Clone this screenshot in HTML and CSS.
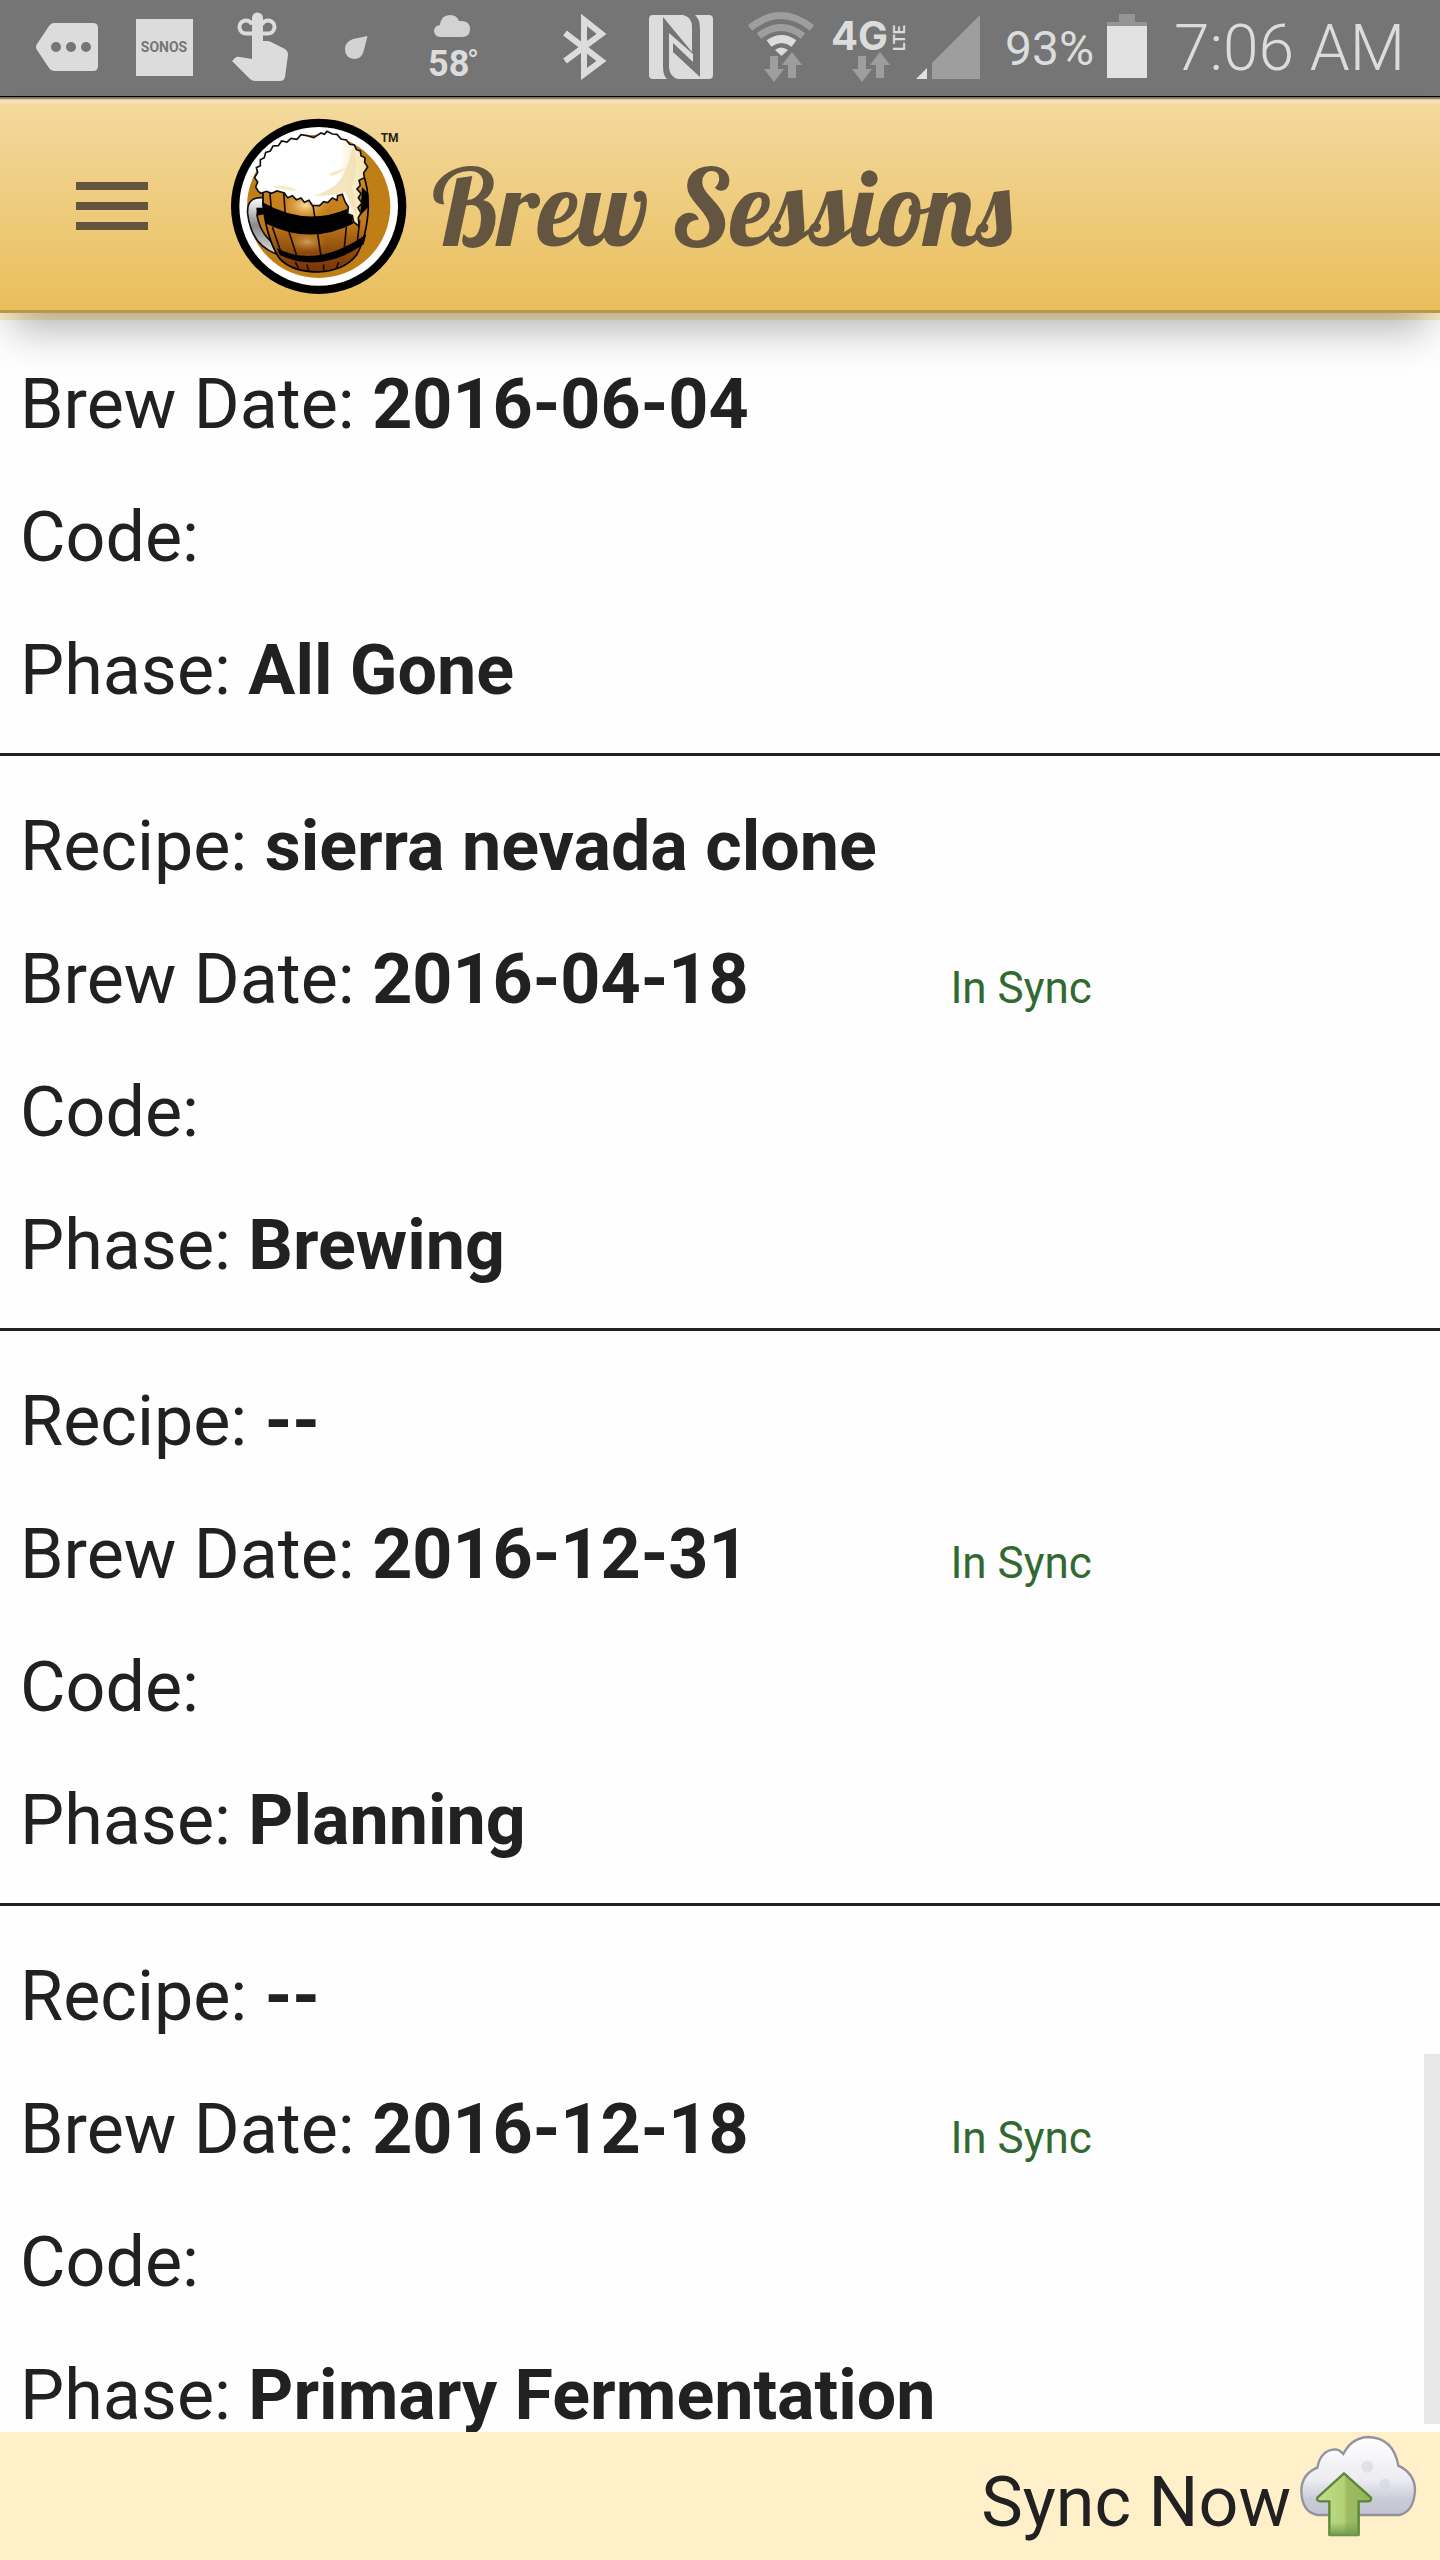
FILE: index.html
```html
<!DOCTYPE html>
<html lang="en">
<head>
    <meta charset="UTF-8">
    <meta name="viewport" content="width=device-width, initial-scale=1.0">
    <title>Brew Sessions</title>
    <link rel="stylesheet" href="styles.css">
</head>
<body>
    <!-- Status bar -->
    <div class="status-bar">
        <div class="status-group">
            <svg width="116" height="96" viewBox="0 0 116 96">
                <path fill="#dcdcdc" fill-rule="evenodd" d="M54 23h39q5 0 5 5v38q0 5-5 5H54q-3 0-5-3L37 50q-2-3 0-6l12-18q2-3 5-3zM56 42a5 5 0 1 0 0 10 5 5 0 1 0 0-10zM71 42a5 5 0 1 0 0 10 5 5 0 1 0 0-10zM86 42a5 5 0 1 0 0 10 5 5 0 1 0 0-10z"/>
            </svg>
            <svg width="96" height="96" viewBox="116 0 96 96">
                <rect x="136" y="19" width="57" height="57" fill="#dcdcdc"/>
                <text class="sonos" x="164" y="52" text-anchor="middle">SONOS</text>
            </svg>
            <svg width="104" height="96" viewBox="212 0 104 96">
                <path fill="none" stroke="#dcdcdc" stroke-width="4" d="M254 33.500H246a6.500 6.500 0 1 1 6-9M260 33.500H268a6.500 6.500 0 1 0-6-9"/>
                <path fill="#dcdcdc" d="M252 59V18a5.300 5.300 0 0 1 11 0v23h4q2 0 4 1l14 7q3 2 3 6l-3 22q-1 4-5 4h-25q-3 0-5-2L232 61l3-3q2-2 5-1z"/>
            </svg>
            <svg width="82" height="96" viewBox="316 0 82 96">
                <path fill="#d2d2d2" d="M367.500 36L364 50q-2 9-10 9-9-1-9-10 0-7 8-10z"/>
            </svg>
            <svg width="108" height="96" viewBox="398 0 108 96">
                <path fill="#d2d2d2" d="M440 37a6 6 0 0 1 0-12q1-10 10-10 7 0 9 6 11-1 11 8 0 8-8 8z"/>
                <text class="temp" x="428" y="76">58</text>
                <text class="degree" x="467" y="72">°</text>
            </svg>
        </div>
        <div class="status-group">
            <svg width="83" height="96" viewBox="546 0 83 96">
                <path fill="none" stroke="#dcdcdc" stroke-width="6" d="M566 33l36.500 28L585 74V20l17.500 14L566 61"/>
            </svg>
            <svg width="102" height="96" viewBox="629 0 102 96">
                <path fill="#dcdcdc" d="M654 15h30q9 2 9 12v25L664 17v49q0 10 4 13h-14q-4 0-4-4V19q0-4 4-4zM710 15h-14q5 4 5 14v48l-27-25v-9l20 19V54L670 33v35q1 9 9 11h31q4 0 4-4V19q0-4-4-4z"/>
            </svg>
            <svg width="93" height="96" viewBox="731 0 93 96">
                <path fill="none" stroke="#9e9e9e" stroke-width="7" d="M751 28q31-25 62 0M760 36q22-17 44 0"/>
                <path fill="none" stroke="#dcdcdc" stroke-width="8" d="M770 43.500q12.500-9 25 0"/>
                <path fill="#dcdcdc" d="M776 50q6-5 13 0l-6.500 6z"/>
                <path fill="#9e9e9e" d="M771 56h8v13h6l-10 13-10-13h6zM789 78v-13h-6l10-13 10 13h-6v13z"/>
            </svg>
            <svg width="88" height="96" viewBox="824 0 88 96">
                <text class="network" x="832" y="50">4G</text>
                <text class="lte" transform="translate(906 51) rotate(-90)">LTE</text>
                <path fill="#9e9e9e" d="M859 56h8v13h6l-10 13-10-13h6zM877 78v-13h-6l10-13 10 13h-6v13z"/>
            </svg>
            <svg width="82" height="96" viewBox="912 0 82 96">
                <path fill="#e0e0e0" d="M917 79l11-11v11z"/>
                <path fill="#9e9e9e" d="M933 79V63l48-48v64z"/>
            </svg>
            <span class="battery-level">93%</span>
            <svg width="68" height="96" viewBox="1094 0 68 96">
                <path fill="#959595" d="M1107 22h12v-8h16v8h12v4h-40z"/>
                <rect x="1107" y="26" width="40" height="52" fill="#e2e2e2"/>
            </svg>
            <span class="clock">7:06 AM</span>
        </div>
    </div>

    <header class="header">
        <button class="menu-btn" type="button" aria-label="Menu">
            <span></span>
            <span></span>
            <span></span>
        </button>
        <svg class="logo" width="178" height="178" viewBox="59 80 534 534">
            <defs>
                <linearGradient id="wood" x1="0" y1="0" x2="0" y2="1">
                    <stop offset="0" stop-color="#cf8a1e"/>
                    <stop offset="0.5" stop-color="#c07a1c"/>
                    <stop offset="0.8" stop-color="#8a4a0c"/>
                    <stop offset="1" stop-color="#7a3206"/>
                </linearGradient>
                <radialGradient id="shine">
                    <stop offset="0" stop-color="#f8dc9c"/>
                    <stop offset="1" stop-color="#d99a30" stop-opacity="0"/>
                </radialGradient>
                <linearGradient id="handle" x1="0" y1="0" x2="0" y2="1">
                    <stop offset="0" stop-color="#fff"/>
                    <stop offset="0.5" stop-color="#8a8a8a"/>
                    <stop offset="1" stop-color="#ddd"/>
                </linearGradient>
                <linearGradient id="foam" x1="0" y1="0" x2="1" y2="0">
                    <stop offset="0.75" stop-color="#fff"/>
                    <stop offset="1" stop-color="#f3dda0"/>
                </linearGradient>
            </defs>
            <circle cx="325" cy="348" r="263" fill="#000"/>
            <circle cx="325" cy="348" r="238" fill="#fff"/>
            <circle cx="325" cy="348" r="215" fill="#c07e17"/>
            <!-- handle -->
            <path d="M160 322Q108 318 112 370Q122 462 196 490L206 470Q152 440 140 375Q140 358 162 362Z" fill="url(#handle)" stroke="#111" stroke-width="5"/>
            <path d="M138 352L160 352V372L140 376Z" fill="#000"/>
            <!-- barrel -->
            <path d="M158 290L158 345Q170 450 208 505Q245 545 325 545Q400 542 438 495Q470 440 474 350Q474 290 458 250Z" fill="url(#wood)" stroke="#000" stroke-width="5"/>
            <ellipse cx="285" cy="345" rx="75" ry="50" fill="url(#shine)"/>
            <ellipse cx="290" cy="455" rx="60" ry="32" fill="url(#shine)" opacity="0.5"/>
            <path d="M178 300L184 370M220 305L225 375M308 345L314 385M186 410L214 492M236 425L262 505M322 430L334 510M408 410L400 495M448 390L440 465M255 515L265 535M290 522L295 542M340 522L340 542M385 515L378 535" fill="none" stroke="#1a0a00" stroke-width="5"/>
            <path d="M155 335Q285 410 412 355L420 348L428 400Q300 465 168 400Z" fill="#000"/>
            <path d="M200 474Q320 536 468 432L460 462Q330 552 208 494Z" fill="#000"/>
            <path d="M455 290L474 310V350L450 375Z" fill="#000"/>
            <!-- foam -->
            <path d="M144 303L136 290L142 275L133 262L142 246L138 232L150 226L150 208L162 202L166 186L180 182L188 167L204 166L214 152L230 155L242 144L260 147L272 133L290 136L310 142L332 128L342 132L350 123L366 131L380 132L392 146L408 149L418 162L432 164L438 178L450 182L452 196L464 202L463 216L472 230L460 248L462 262L446 270L450 285L440 296L452 310L444 322L455 338L443 352L452 368L444 382L446 408L430 395L426 376L412 370L414 350L404 334L396 312L382 316L380 330L366 323L352 337L340 334L328 346L306 345L296 330L282 336L272 323L258 328L246 316L232 322L222 308L200 302L184 309L168 303L152 309Z" fill="url(#foam)" stroke="#111" stroke-width="5"/>
            <path d="M425 175Q452 210 425 290Q438 330 440 380Q420 340 405 305Q350 320 310 315Q370 300 395 260Q420 210 425 175Z" fill="#f3e0b0" opacity="0.8"/>
            <path d="M185 288Q220 280 260 298Q240 305 210 295ZM355 250Q380 240 410 230Q395 248 365 258Z" fill="#f8ebc8"/>
            <text class="tm" x="511" y="154">TM</text>
        </svg>
        <h1 class="title">Brew Sessions</h1>
    </header>

    <main class="content">
        <ul class="session-list">
            <li class="session">
                <div class="row"><span class="field">Brew Date: <b>2016-06-04</b></span></div>
                <div class="row"><span class="field">Code:</span></div>
                <div class="row"><span class="field">Phase: <b>All Gone</b></span></div>
            </li>
            <li class="session">
                <div class="row"><span class="field">Recipe: <b>sierra nevada clone</b></span></div>
                <div class="row"><span class="field">Brew Date: <b>2016-04-18</b></span><span class="sync-state">In Sync</span></div>
                <div class="row"><span class="field">Code:</span></div>
                <div class="row"><span class="field">Phase: <b>Brewing</b></span></div>
            </li>
            <li class="session">
                <div class="row"><span class="field">Recipe: <b>--</b></span></div>
                <div class="row"><span class="field">Brew Date: <b>2016-12-31</b></span><span class="sync-state">In Sync</span></div>
                <div class="row"><span class="field">Code:</span></div>
                <div class="row"><span class="field">Phase: <b>Planning</b></span></div>
            </li>
            <li class="session">
                <div class="row"><span class="field">Recipe: <b>--</b></span></div>
                <div class="row"><span class="field">Brew Date: <b>2016-12-18</b></span><span class="sync-state">In Sync</span></div>
                <div class="row"><span class="field">Code:</span></div>
                <div class="row"><span class="field">Phase: <b>Primary Fermentation</b></span></div>
            </li>
        </ul>
        <div class="scroll-thumb"></div>
    </main>

    <footer class="footer">
        <button class="sync-btn" type="button">
            <span>Sync Now</span>
            <svg width="118" height="104" viewBox="1017 102 354 312">
                <defs>
                    <linearGradient id="cloud" x1="0" y1="0" x2="0" y2="1">
                        <stop offset="0" stop-color="#fff"/>
                        <stop offset="0.55" stop-color="#ececf1"/>
                        <stop offset="0.8" stop-color="#c9cbd7"/>
                        <stop offset="1" stop-color="#c3c5d2"/>
                    </linearGradient>
                    <linearGradient id="arrow" x1="0" y1="0" x2="1" y2="0">
                        <stop offset="0" stop-color="#c3dc8c"/>
                        <stop offset="0.5" stop-color="#b2d274"/>
                        <stop offset="0.55" stop-color="#9dbb62"/>
                        <stop offset="1" stop-color="#94b45c"/>
                    </linearGradient>
                    <linearGradient id="arrowFade" x1="0" y1="0" x2="0" y2="1">
                        <stop offset="0.6" stop-color="#6f9c4e" stop-opacity="0"/>
                        <stop offset="1" stop-color="#6f9c4e"/>
                    </linearGradient>
                </defs>
                <path d="M1072 345Q1024 336 1024 270Q1026 222 1072 203Q1082 150 1125 148Q1138 148 1150 162Q1175 112 1226 111Q1300 114 1315 197Q1364 220 1365 270Q1362 335 1318 345Z" fill="url(#cloud)" stroke="#91949e" stroke-width="7"/>
                <circle cx="1222" cy="200" r="18" fill="#d5d6de" opacity="0.6"/>
                <circle cx="1275" cy="252" r="16" fill="#cfd1da" opacity="0.5"/>
                <path d="M1152 220L1233 293Q1234 304 1224 304H1196V405H1108V304H1080Q1068 302 1072 293Z" fill="url(#arrow)" stroke="#5a8636" stroke-width="7" stroke-linejoin="round"/>
                <path d="M1108 304H1196V407H1108Z" fill="url(#arrowFade)"/>
            </svg>
        </button>
    </footer>
</body>
</html>
```
FILE: styles.css
```css
* {
    box-sizing: border-box;
}

body {
    margin: 0;
    height: 100vh;
    display: flex;
    flex-direction: column;
    font-family: Roboto, Arial, sans-serif;
    font-size: 70px;
    color: #212121;
    background-color: #fff;
}

button {
    padding: 0;
    border: none;
    background: none;
    color: inherit;
    font: inherit;
    cursor: pointer;
}

svg {
    display: block;
    flex: none;
}

/* Status bar */
.status-bar {
    display: flex;
    flex: none;
    justify-content: space-between;
    height: 96px;
    padding-right: 35px;
    background-color: #757575;
    color: #dcdcdc;
}

.status-group {
    display: flex;
    white-space: nowrap;
}

.status-group text {
    fill: #dcdcdc;
}

.status-group .sonos {
    font-size: 14px;
    font-weight: 700;
    fill: #757575;
}

.temp {
    font-size: 36px;
    font-weight: 700;
}

.degree {
    font-size: 32px;
}

.network {
    font-family: Inter, sans-serif;
    font-size: 40px;
    font-weight: 700;
}

.lte {
    font-size: 16px;
    font-weight: 700;
}

.battery-level {
    padding-left: 12px;
    font-size: 48px;
    line-height: 98px;
}

.clock {
    padding-left: 12px;
    font-size: 64px;
    font-weight: 300;
    line-height: 98px;
}

/* Header */
.header {
    position: relative;
    z-index: 1;
    display: flex;
    flex: none;
    align-items: center;
    height: 217px;
    padding: 5px 76px 0;
    border-top: 1px solid #000;
    border-bottom: 3px solid #bd964a;
    background: linear-gradient(#7d6b4c 0, #7d6b4c 1px, #f8e3c2 3px, #f3d99d 8px, #e9be5c);
    box-shadow: 0 28px 40px -12px rgba(0, 0, 0, 0.3);
}

.menu-btn {
    display: flex;
    flex-direction: column;
    gap: 12px;
    width: 72px;
    margin-right: 82px;
}

.menu-btn span {
    width: 100%;
    height: 8px;
    background-color: #645541;
}

.tm {
    font-size: 36px;
    font-weight: 700;
    fill: #2b2413;
}

.title {
    margin: 0 0 0 24px;
    font-family: Lobster, "Liberation Serif", serif;
    font-size: 105px;
    font-weight: 400;
    color: #645541;
    white-space: nowrap;
}

/* Session list */
.content {
    position: relative;
    flex: 1;
    min-height: 0;
    overflow: hidden;
    border-top: 7px solid #ffefc8;
    background-color: #fefefe;
}

.session-list {
    margin: 0;
    padding: 0;
    list-style: none;
}

.session {
    padding: 24px 0 16px;
    border-bottom: 3px solid #212121;
}

.session:first-child {
    padding-top: 18px;
}

.session:last-child {
    border-bottom: none;
}

.row {
    display: flex;
    align-items: baseline;
    line-height: 133px;
    white-space: nowrap;
}

.field {
    width: 66%;
    padding-left: 20px;
}

.sync-state {
    font-size: 44px;
    line-height: 1;
    color: #316a31;
}

.scroll-thumb {
    position: absolute;
    right: 0;
    bottom: 8px;
    width: 16px;
    height: 370px;
    background-color: #e7e7e7;
}

/* Footer */
.footer {
    display: flex;
    flex: none;
    justify-content: flex-end;
    height: 128px;
    padding-right: 23px;
    background-color: #fff0ca;
}

.sync-btn {
    display: flex;
    gap: 8px;
    line-height: 140px;
}

.sync-btn svg {
    margin-top: 2px;
}
```
